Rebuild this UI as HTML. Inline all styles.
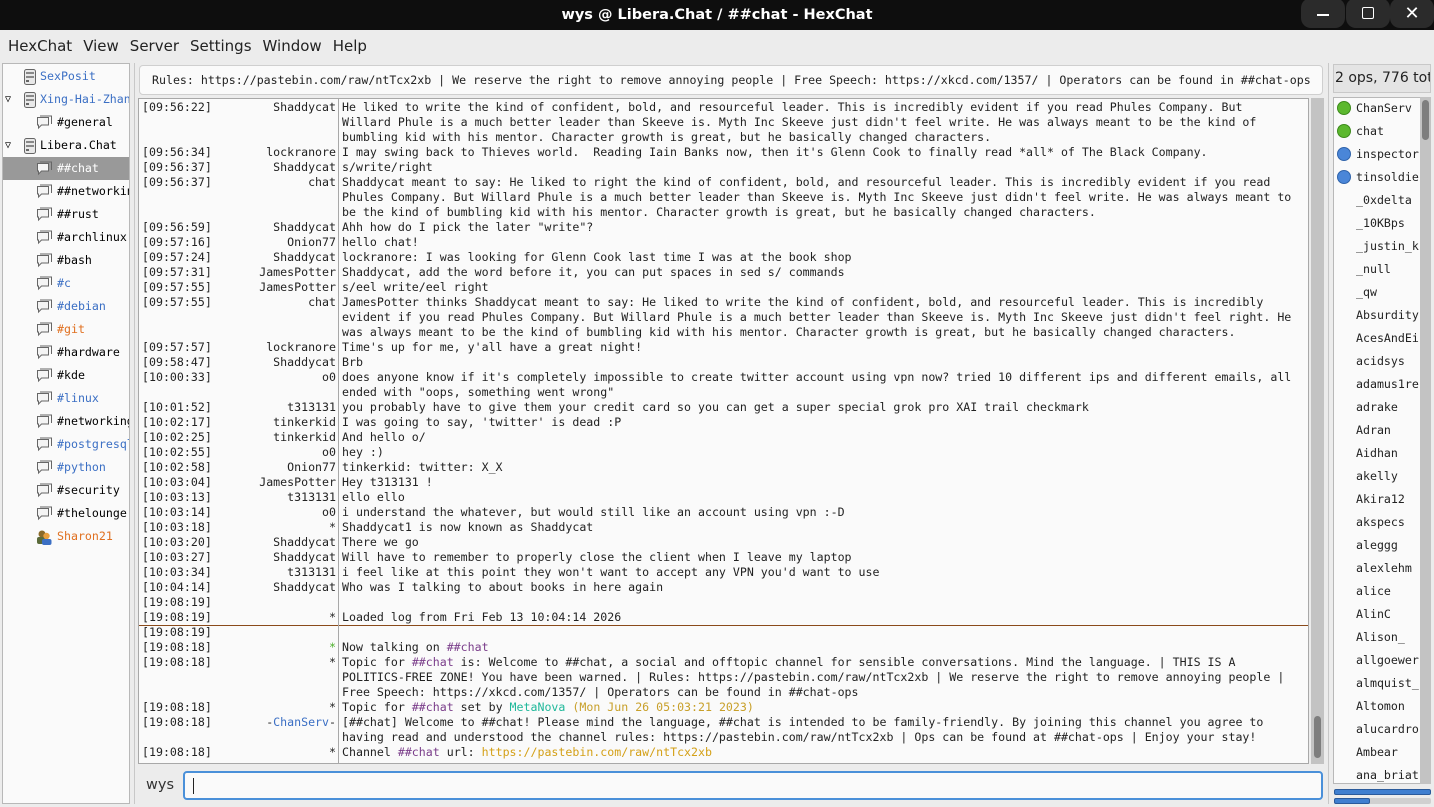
<!DOCTYPE html>
<html><head><meta charset="utf-8"><style>
*{margin:0;padding:0;box-sizing:border-box}
body{width:1434px;height:807px;background:#ececec;position:relative;overflow:hidden;font-family:"DejaVu Sans","Liberation Sans",sans-serif}
.abs{position:absolute}
#title{left:0;top:0;width:1434px;height:30px;background:#0e0e0e;color:#fff;font-weight:bold;font-size:14.5px;text-align:center;line-height:30px}
.wb{top:0;width:44px;height:30px;background:#2b2b2b;border-radius:10px;top:-2px}
#menu{top:30px;left:0;width:1434px;height:32px;font-size:15px;color:#222;line-height:33px}
#menu span{margin-left:8px;margin-right:3px}
.mono{font-family:"DejaVu Sans Mono","Liberation Mono",monospace}
#left{left:2px;top:63px;width:128px;height:741px;background:#fafafa;border:1px solid #b8b8b8;overflow:hidden}
.tr{position:absolute;height:23px;line-height:23px;font-size:11.6px;white-space:nowrap}
.tr svg{position:absolute;top:4px}
.tn{position:absolute;left:37px;top:0}
#topic{left:139px;top:65px;width:1184px;height:30px;background:#fafafa;border:1px solid #cfcfcf;border-radius:4px;font-size:11.6px;line-height:28px;padding-left:12px;white-space:nowrap;overflow:hidden;color:#222}
#chat{left:138px;top:98px;width:1171px;height:666px;background:#fafafa;border:1px solid #a8a8a8;overflow:hidden;font-size:11.6px;color:#222}
.l{position:absolute;left:0;height:15px;line-height:15px;white-space:pre;width:1170px}
.ts{position:absolute;left:3px}
.nk{position:absolute;right:973px;text-align:right}
.tx{position:absolute;left:203px}
#sep{left:338px;top:98px;width:1px;height:666px;background:#a8a8a8}
.ch{color:#7a3d8a}.url{color:#d4a017}.cs{color:#3b6fc4}.gr{color:#4caf2a}.mn{color:#1fb89a}.dt{color:#c8a02a}
#sb{left:1311px;top:98px;width:13px;height:666px;background:#c3c3c3}
#input{left:183px;top:771px;width:1140px;height:29px;border:2px solid #4a90d9;border-radius:4px;background:#fafafa}
#right{left:1333px;top:97px;width:88px;height:687px;background:#fafafa;border:1px solid #b8b8b8;overflow:hidden}
.u{position:absolute;left:22px;font-size:11.6px;line-height:23px;height:23px;white-space:nowrap;color:#222}
.dot{position:absolute;left:3px;width:14px;height:14px;border-radius:50%}
</style></head><body>
<svg width="0" height="0" style="position:absolute"><defs>
<symbol id="bub" viewBox="0 0 16 16"><path d="M1.5 2.5h11v7.5h-7l-3 3v-3h-1z" fill="#f4f4f4" stroke="#666"/><path d="M4 1h11.5v8" fill="none" stroke="#666"/></symbol>
<symbol id="srv" viewBox="0 0 14 16"><rect x="1.5" y="0.5" width="11" height="15" rx="2" fill="#e8e8e8" stroke="#666"/><rect x="3" y="3" width="8" height="2" fill="#888"/><rect x="3" y="7" width="8" height="2" fill="#888"/><rect x="3" y="11" width="3" height="2" fill="#666"/></symbol>
</defs></svg>
<div id="title" class="abs">wys @ Libera.Chat / ##chat - HexChat</div>
<div class="abs wb" style="left:1301px"><div style="position:absolute;left:16px;top:16px;width:12px;height:2px;background:#fff"></div></div>
<div class="abs wb" style="left:1346px"><div style="position:absolute;left:16px;top:9px;width:12px;height:12px;border:1.5px solid #fff;border-radius:2px"></div></div>
<div class="abs wb" style="left:1390px;color:#fff;text-align:center;line-height:32px;font-size:18px">✕</div>
<div id="menu" class="abs"><span>HexChat</span><span>View</span><span>Server</span><span>Settings</span><span>Window</span><span>Help</span></div>
<div class="abs" style="left:134px;top:63px;width:1px;height:741px;background:#c8c8c8"></div>
<div class="abs" style="left:1328px;top:63px;width:1px;height:741px;background:#c8c8c8"></div>

<div id="left" class="abs mono">
<div class="abs" style="left:0;top:93px;width:128px;height:23px;background:#999"></div>
<div class="tr" style="top:1px;left:0;width:128px"><svg width="14" height="16" style="left:20px"><use href="#srv"/></svg><span class="tn" style="color:#3b6fc4">SexPosit</span></div>
<div class="tr" style="top:24px;left:0;width:128px"><span style="position:absolute;left:2px;font-size:10px">▽</span><svg width="14" height="16" style="left:20px"><use href="#srv"/></svg><span class="tn" style="color:#3b6fc4">Xing-Hai-Zhang</span></div>
<div class="tr" style="top:47px;left:33px"><svg width="16" height="16"><use href="#bub"/></svg><span style="margin-left:21px">#general</span></div>
<div class="tr" style="top:70px;left:0;width:128px"><span style="position:absolute;left:2px;font-size:10px">▽</span><svg width="14" height="16" style="left:20px"><use href="#srv"/></svg><span class="tn">Libera.Chat</span></div>
<div class="tr" style="top:93px;left:33px;color:#fff"><svg width="16" height="16"><use href="#bub"/></svg><span style="margin-left:21px">##chat</span></div>
<div class="tr" style="top:116px;left:33px"><svg width="16" height="16"><use href="#bub"/></svg><span style="margin-left:21px">##networking</span></div>
<div class="tr" style="top:139px;left:33px"><svg width="16" height="16"><use href="#bub"/></svg><span style="margin-left:21px">##rust</span></div>
<div class="tr" style="top:162px;left:33px"><svg width="16" height="16"><use href="#bub"/></svg><span style="margin-left:21px">#archlinux</span></div>
<div class="tr" style="top:185px;left:33px"><svg width="16" height="16"><use href="#bub"/></svg><span style="margin-left:21px">#bash</span></div>
<div class="tr" style="top:208px;left:33px"><svg width="16" height="16"><use href="#bub"/></svg><span style="margin-left:21px;color:#3b6fc4">#c</span></div>
<div class="tr" style="top:231px;left:33px"><svg width="16" height="16"><use href="#bub"/></svg><span style="margin-left:21px;color:#3b6fc4">#debian</span></div>
<div class="tr" style="top:254px;left:33px"><svg width="16" height="16"><use href="#bub"/></svg><span style="margin-left:21px;color:#e07020">#git</span></div>
<div class="tr" style="top:277px;left:33px"><svg width="16" height="16"><use href="#bub"/></svg><span style="margin-left:21px">#hardware</span></div>
<div class="tr" style="top:300px;left:33px"><svg width="16" height="16"><use href="#bub"/></svg><span style="margin-left:21px">#kde</span></div>
<div class="tr" style="top:323px;left:33px"><svg width="16" height="16"><use href="#bub"/></svg><span style="margin-left:21px;color:#3b6fc4">#linux</span></div>
<div class="tr" style="top:346px;left:33px"><svg width="16" height="16"><use href="#bub"/></svg><span style="margin-left:21px">#networking</span></div>
<div class="tr" style="top:369px;left:33px"><svg width="16" height="16"><use href="#bub"/></svg><span style="margin-left:21px;color:#3b6fc4">#postgresql</span></div>
<div class="tr" style="top:392px;left:33px"><svg width="16" height="16"><use href="#bub"/></svg><span style="margin-left:21px;color:#3b6fc4">#python</span></div>
<div class="tr" style="top:415px;left:33px"><svg width="16" height="16"><use href="#bub"/></svg><span style="margin-left:21px">#security</span></div>
<div class="tr" style="top:438px;left:33px"><svg width="16" height="16"><use href="#bub"/></svg><span style="margin-left:21px">#thelounge</span></div>
<div class="tr" style="top:461px;left:33px"><svg width="16" height="16" viewBox="0 0 16 16"><circle cx="6" cy="5" r="3.5" fill="#8a6a2a"/><rect x="1" y="8" width="9" height="7" rx="2" fill="#5a6a3a"/><circle cx="10.5" cy="7" r="3.2" fill="#e8a040"/><rect x="6" y="10" width="9.5" height="6" rx="2" fill="#3b6fc4"/></svg><span style="margin-left:21px;color:#e07020">Sharon21</span></div>
</div>

<div id="topic" class="abs mono">Rules: https://pastebin.com/raw/ntTcx2xb | We reserve the right to remove annoying people | Free Speech: https://xkcd.com/1357/ | Operators can be found in ##chat-ops</div>

<div id="chat" class="abs mono">
<div class="l" style="top:1px"><span class="ts">[09:56:22]</span><span class="nk">Shaddycat</span><span class="tx">He liked to write the kind of confident, bold, and resourceful leader. This is incredibly evident if you read Phules Company. But</span></div>
<div class="l" style="top:16px"><span class="tx">Willard Phule is a much better leader than Skeeve is. Myth Inc Skeeve just didn't feel write. He was always meant to be the kind of</span></div>
<div class="l" style="top:31px"><span class="tx">bumbling kid with his mentor. Character growth is great, but he basically changed characters.</span></div>
<div class="l" style="top:46px"><span class="ts">[09:56:34]</span><span class="nk">lockranore</span><span class="tx">I may swing back to Thieves world.  Reading Iain Banks now, then it's Glenn Cook to finally read *all* of The Black Company.</span></div>
<div class="l" style="top:61px"><span class="ts">[09:56:37]</span><span class="nk">Shaddycat</span><span class="tx">s/write/right</span></div>
<div class="l" style="top:76px"><span class="ts">[09:56:37]</span><span class="nk">chat</span><span class="tx">Shaddycat meant to say: He liked to right the kind of confident, bold, and resourceful leader. This is incredibly evident if you read</span></div>
<div class="l" style="top:91px"><span class="tx">Phules Company. But Willard Phule is a much better leader than Skeeve is. Myth Inc Skeeve just didn't feel write. He was always meant to</span></div>
<div class="l" style="top:106px"><span class="tx">be the kind of bumbling kid with his mentor. Character growth is great, but he basically changed characters.</span></div>
<div class="l" style="top:121px"><span class="ts">[09:56:59]</span><span class="nk">Shaddycat</span><span class="tx">Ahh how do I pick the later "write"?</span></div>
<div class="l" style="top:136px"><span class="ts">[09:57:16]</span><span class="nk">Onion77</span><span class="tx">hello chat!</span></div>
<div class="l" style="top:151px"><span class="ts">[09:57:24]</span><span class="nk">Shaddycat</span><span class="tx">lockranore: I was looking for Glenn Cook last time I was at the book shop</span></div>
<div class="l" style="top:166px"><span class="ts">[09:57:31]</span><span class="nk">JamesPotter</span><span class="tx">Shaddycat, add the word before it, you can put spaces in sed s/ commands</span></div>
<div class="l" style="top:181px"><span class="ts">[09:57:55]</span><span class="nk">JamesPotter</span><span class="tx">s/eel write/eel right</span></div>
<div class="l" style="top:196px"><span class="ts">[09:57:55]</span><span class="nk">chat</span><span class="tx">JamesPotter thinks Shaddycat meant to say: He liked to write the kind of confident, bold, and resourceful leader. This is incredibly</span></div>
<div class="l" style="top:211px"><span class="tx">evident if you read Phules Company. But Willard Phule is a much better leader than Skeeve is. Myth Inc Skeeve just didn't feel right. He</span></div>
<div class="l" style="top:226px"><span class="tx">was always meant to be the kind of bumbling kid with his mentor. Character growth is great, but he basically changed characters.</span></div>
<div class="l" style="top:241px"><span class="ts">[09:57:57]</span><span class="nk">lockranore</span><span class="tx">Time's up for me, y'all have a great night!</span></div>
<div class="l" style="top:256px"><span class="ts">[09:58:47]</span><span class="nk">Shaddycat</span><span class="tx">Brb</span></div>
<div class="l" style="top:271px"><span class="ts">[10:00:33]</span><span class="nk">o0</span><span class="tx">does anyone know if it's completely impossible to create twitter account using vpn now? tried 10 different ips and different emails, all</span></div>
<div class="l" style="top:286px"><span class="tx">ended with "oops, something went wrong"</span></div>
<div class="l" style="top:301px"><span class="ts">[10:01:52]</span><span class="nk">t313131</span><span class="tx">you probably have to give them your credit card so you can get a super special grok pro XAI trail checkmark</span></div>
<div class="l" style="top:316px"><span class="ts">[10:02:17]</span><span class="nk">tinkerkid</span><span class="tx">I was going to say, 'twitter' is dead :P</span></div>
<div class="l" style="top:331px"><span class="ts">[10:02:25]</span><span class="nk">tinkerkid</span><span class="tx">And hello o/</span></div>
<div class="l" style="top:346px"><span class="ts">[10:02:55]</span><span class="nk">o0</span><span class="tx">hey :)</span></div>
<div class="l" style="top:361px"><span class="ts">[10:02:58]</span><span class="nk">Onion77</span><span class="tx">tinkerkid: twitter: X_X</span></div>
<div class="l" style="top:376px"><span class="ts">[10:03:04]</span><span class="nk">JamesPotter</span><span class="tx">Hey t313131 !</span></div>
<div class="l" style="top:391px"><span class="ts">[10:03:13]</span><span class="nk">t313131</span><span class="tx">ello ello</span></div>
<div class="l" style="top:406px"><span class="ts">[10:03:14]</span><span class="nk">o0</span><span class="tx">i understand the whatever, but would still like an account using vpn :-D</span></div>
<div class="l" style="top:421px"><span class="ts">[10:03:18]</span><span class="nk">*</span><span class="tx">Shaddycat1 is now known as Shaddycat</span></div>
<div class="l" style="top:436px"><span class="ts">[10:03:20]</span><span class="nk">Shaddycat</span><span class="tx">There we go</span></div>
<div class="l" style="top:451px"><span class="ts">[10:03:27]</span><span class="nk">Shaddycat</span><span class="tx">Will have to remember to properly close the client when I leave my laptop</span></div>
<div class="l" style="top:466px"><span class="ts">[10:03:34]</span><span class="nk">t313131</span><span class="tx">i feel like at this point they won't want to accept any VPN you'd want to use</span></div>
<div class="l" style="top:481px"><span class="ts">[10:04:14]</span><span class="nk">Shaddycat</span><span class="tx">Who was I talking to about books in here again</span></div>
<div class="l" style="top:496px"><span class="ts">[19:08:19]</span></div>
<div class="l" style="top:511px"><span class="ts">[19:08:19]</span><span class="nk">*</span><span class="tx">Loaded log from Fri Feb 13 10:04:14 2026</span></div>
<div style="position:absolute;left:0;top:526px;width:1170px;height:1px;background:#8a4a1a"></div>
<div class="l" style="top:526px"><span class="ts">[19:08:19]</span></div>
<div class="l" style="top:541px"><span class="ts">[19:08:18]</span><span class="nk gr">*</span><span class="tx">Now talking on <span class="ch">##chat</span></span></div>
<div class="l" style="top:556px"><span class="ts">[19:08:18]</span><span class="nk">*</span><span class="tx">Topic for <span class="ch">##chat</span> is: Welcome to ##chat, a social and offtopic channel for sensible conversations. Mind the language. | THIS IS A</span></div>
<div class="l" style="top:571px"><span class="tx">POLITICS-FREE ZONE! You have been warned. | Rules: https://pastebin.com/raw/ntTcx2xb | We reserve the right to remove annoying people |</span></div>
<div class="l" style="top:586px"><span class="tx">Free Speech: https://xkcd.com/1357/ | Operators can be found in ##chat-ops</span></div>
<div class="l" style="top:601px"><span class="ts">[19:08:18]</span><span class="nk">*</span><span class="tx">Topic for <span class="ch">##chat</span> set by <span class="mn">MetaNova</span> <span class="dt">(Mon Jun 26 05:03:21 2023)</span></span></div>
<div class="l" style="top:616px"><span class="ts">[19:08:18]</span><span class="nk">-<span class="cs">ChanServ</span>-</span><span class="tx">[##chat] Welcome to ##chat! Please mind the language, ##chat is intended to be family-friendly. By joining this channel you agree to</span></div>
<div class="l" style="top:631px"><span class="tx">having read and understood the channel rules: https://pastebin.com/raw/ntTcx2xb | Ops can be found at ##chat-ops | Enjoy your stay!</span></div>
<div class="l" style="top:646px"><span class="ts">[19:08:18]</span><span class="nk">*</span><span class="tx">Channel <span class="ch">##chat</span> url: <span class="url">https://pastebin.com/raw/ntTcx2xb</span></span></div>
</div>
<div id="sep" class="abs"></div>
<div id="sb" class="abs"><div style="position:absolute;left:3px;top:618px;width:7px;height:42px;background:#7e7e7e;border-radius:4px"></div></div>

<div class="abs" style="left:146px;top:777px;font-size:14.5px;color:#333">wys</div>
<div id="input" class="abs"><div style="position:absolute;left:8px;top:5px;width:1px;height:16px;background:#222"></div></div>

<div class="abs" style="left:1333px;top:64px;width:98px;height:29px;border:1px solid #c8c8c8;background:#e4e4e4;font-size:14px;line-height:27px;padding-left:1px;white-space:nowrap;overflow:hidden;color:#222">2 ops, 776 total</div>
<div id="right" class="abs mono">
<div class="u" style="top:-1px"><span class="dot" style="left:-19px;top:4px;background:#5cb82e;border:1px solid #3d8a1c"></span>ChanServ</div>
<div class="u" style="top:22px"><span class="dot" style="left:-19px;top:4px;background:#5cb82e;border:1px solid #3d8a1c"></span>chat</div>
<div class="u" style="top:45px"><span class="dot" style="left:-19px;top:4px;background:#4a86d8;border:1px solid #2f63aa"></span>inspector</div>
<div class="u" style="top:68px"><span class="dot" style="left:-19px;top:4px;background:#4a86d8;border:1px solid #2f63aa"></span>tinsoldier</div>
<div class="u" style="top:91px">_0xdelta</div>
<div class="u" style="top:114px">_10KBps</div>
<div class="u" style="top:137px">_justin_k</div>
<div class="u" style="top:160px">_null</div>
<div class="u" style="top:183px">_qw</div>
<div class="u" style="top:206px">Absurdity</div>
<div class="u" style="top:229px">AcesAndEi</div>
<div class="u" style="top:252px">acidsys</div>
<div class="u" style="top:275px">adamus1re</div>
<div class="u" style="top:298px">adrake</div>
<div class="u" style="top:321px">Adran</div>
<div class="u" style="top:344px">Aidhan</div>
<div class="u" style="top:367px">akelly</div>
<div class="u" style="top:390px">Akira12</div>
<div class="u" style="top:413px">akspecs</div>
<div class="u" style="top:436px">aleggg</div>
<div class="u" style="top:459px">alexlehm</div>
<div class="u" style="top:482px">alice</div>
<div class="u" style="top:505px">AlinC</div>
<div class="u" style="top:528px">Alison_</div>
<div class="u" style="top:551px">allgoewer</div>
<div class="u" style="top:574px">almquist_</div>
<div class="u" style="top:597px">Altomon</div>
<div class="u" style="top:620px">alucardro</div>
<div class="u" style="top:643px">Ambear</div>
<div class="u" style="top:666px">ana_briat</div>
</div>
<div class="abs" style="left:1420px;top:97px;width:11px;height:687px;background:#c3c3c3"><div style="position:absolute;left:2px;top:3px;width:7px;height:40px;background:#7e7e7e;border-radius:4px"></div></div>
<div class="abs" style="left:1334px;top:789px;width:97px;height:6px;background:#3f7fd0;border:1px solid #2a5a9a;border-radius:2px"></div>
<div class="abs" style="left:1334px;top:798px;width:97px;height:6px;background:#d0d0d0;border-radius:2px"><div style="width:36px;height:6px;background:#3f7fd0;border:1px solid #2a5a9a;border-radius:2px"></div></div>
</body></html>
